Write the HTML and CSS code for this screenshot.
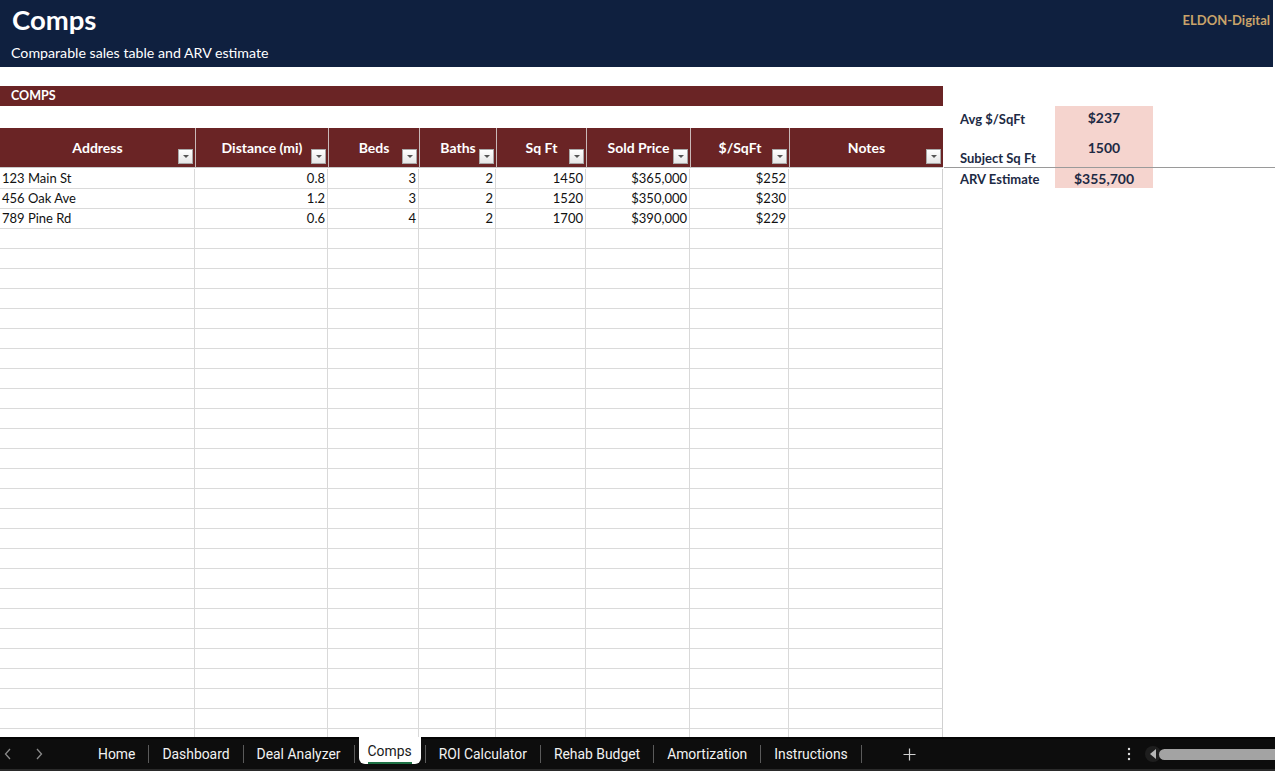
FILE: index.html
```html
<!DOCTYPE html>
<html>
<head>
<meta charset="utf-8">
<link rel="stylesheet" href="styles.css">
</head>
<body>
<div class="page">
  <header class="topbar">
    <div class="titles">
      <div class="title">Comps</div>
      <div class="subtitle">Comparable sales table and ARV estimate</div>
    </div>
    <div class="brand">ELDON-Digital</div>
  </header>

  <main class="content">
    <section class="left">
      <div class="section-bar">COMPS</div>
      <div class="blank-row"></div>
      <div class="table">
        <div class="thead">
          <div class="th">Address<span class="fbtn"></span></div>
          <div class="th">Distance (mi)<span class="fbtn"></span></div>
          <div class="th">Beds<span class="fbtn"></span></div>
          <div class="th">Baths<span class="fbtn"></span></div>
          <div class="th">Sq Ft<span class="fbtn"></span></div>
          <div class="th">Sold Price<span class="fbtn"></span></div>
          <div class="th">$/SqFt<span class="fbtn"></span></div>
          <div class="th">Notes<span class="fbtn"></span></div>
        </div>
        <div class="tbody">
          <div class="tr"><div class="td l">123 Main St</div><div class="td">0.8</div><div class="td">3</div><div class="td">2</div><div class="td">1450</div><div class="td">$365,000</div><div class="td">$252</div><div class="td"></div></div>
          <div class="tr"><div class="td l">456 Oak Ave</div><div class="td">1.2</div><div class="td">3</div><div class="td">2</div><div class="td">1520</div><div class="td">$350,000</div><div class="td">$230</div><div class="td"></div></div>
          <div class="tr"><div class="td l">789 Pine Rd</div><div class="td">0.6</div><div class="td">4</div><div class="td">2</div><div class="td">1700</div><div class="td">$390,000</div><div class="td">$229</div><div class="td"></div></div>
          <div class="tr"><div class="td"></div><div class="td"></div><div class="td"></div><div class="td"></div><div class="td"></div><div class="td"></div><div class="td"></div><div class="td"></div></div>
          <div class="tr"><div class="td"></div><div class="td"></div><div class="td"></div><div class="td"></div><div class="td"></div><div class="td"></div><div class="td"></div><div class="td"></div></div>
          <div class="tr"><div class="td"></div><div class="td"></div><div class="td"></div><div class="td"></div><div class="td"></div><div class="td"></div><div class="td"></div><div class="td"></div></div>
          <div class="tr"><div class="td"></div><div class="td"></div><div class="td"></div><div class="td"></div><div class="td"></div><div class="td"></div><div class="td"></div><div class="td"></div></div>
          <div class="tr"><div class="td"></div><div class="td"></div><div class="td"></div><div class="td"></div><div class="td"></div><div class="td"></div><div class="td"></div><div class="td"></div></div>
          <div class="tr"><div class="td"></div><div class="td"></div><div class="td"></div><div class="td"></div><div class="td"></div><div class="td"></div><div class="td"></div><div class="td"></div></div>
          <div class="tr"><div class="td"></div><div class="td"></div><div class="td"></div><div class="td"></div><div class="td"></div><div class="td"></div><div class="td"></div><div class="td"></div></div>
          <div class="tr"><div class="td"></div><div class="td"></div><div class="td"></div><div class="td"></div><div class="td"></div><div class="td"></div><div class="td"></div><div class="td"></div></div>
          <div class="tr"><div class="td"></div><div class="td"></div><div class="td"></div><div class="td"></div><div class="td"></div><div class="td"></div><div class="td"></div><div class="td"></div></div>
          <div class="tr"><div class="td"></div><div class="td"></div><div class="td"></div><div class="td"></div><div class="td"></div><div class="td"></div><div class="td"></div><div class="td"></div></div>
          <div class="tr"><div class="td"></div><div class="td"></div><div class="td"></div><div class="td"></div><div class="td"></div><div class="td"></div><div class="td"></div><div class="td"></div></div>
          <div class="tr"><div class="td"></div><div class="td"></div><div class="td"></div><div class="td"></div><div class="td"></div><div class="td"></div><div class="td"></div><div class="td"></div></div>
          <div class="tr"><div class="td"></div><div class="td"></div><div class="td"></div><div class="td"></div><div class="td"></div><div class="td"></div><div class="td"></div><div class="td"></div></div>
          <div class="tr"><div class="td"></div><div class="td"></div><div class="td"></div><div class="td"></div><div class="td"></div><div class="td"></div><div class="td"></div><div class="td"></div></div>
          <div class="tr"><div class="td"></div><div class="td"></div><div class="td"></div><div class="td"></div><div class="td"></div><div class="td"></div><div class="td"></div><div class="td"></div></div>
          <div class="tr"><div class="td"></div><div class="td"></div><div class="td"></div><div class="td"></div><div class="td"></div><div class="td"></div><div class="td"></div><div class="td"></div></div>
          <div class="tr"><div class="td"></div><div class="td"></div><div class="td"></div><div class="td"></div><div class="td"></div><div class="td"></div><div class="td"></div><div class="td"></div></div>
          <div class="tr"><div class="td"></div><div class="td"></div><div class="td"></div><div class="td"></div><div class="td"></div><div class="td"></div><div class="td"></div><div class="td"></div></div>
          <div class="tr"><div class="td"></div><div class="td"></div><div class="td"></div><div class="td"></div><div class="td"></div><div class="td"></div><div class="td"></div><div class="td"></div></div>
          <div class="tr"><div class="td"></div><div class="td"></div><div class="td"></div><div class="td"></div><div class="td"></div><div class="td"></div><div class="td"></div><div class="td"></div></div>
          <div class="tr"><div class="td"></div><div class="td"></div><div class="td"></div><div class="td"></div><div class="td"></div><div class="td"></div><div class="td"></div><div class="td"></div></div>
          <div class="tr"><div class="td"></div><div class="td"></div><div class="td"></div><div class="td"></div><div class="td"></div><div class="td"></div><div class="td"></div><div class="td"></div></div>
          <div class="tr"><div class="td"></div><div class="td"></div><div class="td"></div><div class="td"></div><div class="td"></div><div class="td"></div><div class="td"></div><div class="td"></div></div>
          <div class="tr"><div class="td"></div><div class="td"></div><div class="td"></div><div class="td"></div><div class="td"></div><div class="td"></div><div class="td"></div><div class="td"></div></div>
          <div class="tr"><div class="td"></div><div class="td"></div><div class="td"></div><div class="td"></div><div class="td"></div><div class="td"></div><div class="td"></div><div class="td"></div></div>
          <div class="tr"><div class="td"></div><div class="td"></div><div class="td"></div><div class="td"></div><div class="td"></div><div class="td"></div><div class="td"></div><div class="td"></div></div>
        </div>
      </div>
    </section>

    <aside class="right">
      <div class="panel-row r1">
        <div class="plabel">Avg $/SqFt</div>
        <div class="pvalue">$237</div>
      </div>
      <div class="panel-row r2">
        <div class="plabel">Subject Sq Ft</div>
        <div class="pvalue">1500</div>
      </div>
      <div class="panel-row r3">
        <div class="plabel">ARV Estimate</div>
        <div class="pvalue">$355,700</div>
      </div>
    </aside>
  </main>

  <footer class="tabbar">
    <div class="nav">
      <svg class="chev" width="8" height="12" viewBox="0 0 8 12"><path d="M6 1 L1.5 6 L6 11" fill="none" stroke="#8a8a8a" stroke-width="1.3"/></svg>
      <svg class="chev" width="8" height="12" viewBox="0 0 8 12"><path d="M2 1 L6.5 6 L2 11" fill="none" stroke="#8a8a8a" stroke-width="1.3"/></svg>
    </div>
    <div class="tabs">
      <div class="tab">Home</div>
      <div class="sep"></div>
      <div class="tab">Dashboard</div>
      <div class="sep"></div>
      <div class="tab">Deal Analyzer</div>
      <div class="sep"></div>
      <div class="tab active"><span class="atext">Comps</span></div>
      <div class="sep"></div>
      <div class="tab">ROI Calculator</div>
      <div class="sep"></div>
      <div class="tab">Rehab Budget</div>
      <div class="sep"></div>
      <div class="tab">Amortization</div>
      <div class="sep"></div>
      <div class="tab">Instructions</div>
      <div class="sep"></div>
      <div class="plus">
        <svg width="13" height="13" viewBox="0 0 13 13"><path d="M6.5 0.5 V12.5 M0.5 6.5 H12.5" stroke="#d0d0d0" stroke-width="1.2"/></svg>
      </div>
    </div>
    <div class="more">
      <svg width="4" height="14" viewBox="0 0 4 14"><circle cx="2" cy="2" r="1.2" fill="#e0e0e0"/><circle cx="2" cy="7" r="1.2" fill="#e0e0e0"/><circle cx="2" cy="12" r="1.2" fill="#e0e0e0"/></svg>
    </div>
    <div class="hscroll">
      <div class="sarrow"><svg width="8" height="10" viewBox="0 0 8 10"><path d="M7 0 L1 5 L7 10 Z" fill="#b5b5b5"/></svg></div>
      <div class="thumb"></div>
    </div>
  </footer>
</div>
</body>
</html>
```

FILE: styles.css
```css
* { box-sizing: border-box; }
html, body { margin: 0; padding: 0; }
body {
  width: 1275px;
  height: 771px;
  overflow: hidden;
  background: #ffffff;
  font-family: Lato, "Open Sans", sans-serif;
}
.page {
  display: flex;
  flex-direction: column;
  height: 771px;
}

/* top header */
.topbar {
  height: 67px;
  width: 1273px;
  background: #0f203f;
  display: flex;
  justify-content: space-between;
  flex-shrink: 0;
}
.titles { padding: 3px 0 0 12px; }
.title {
  color: #ffffff;
  font-weight: 700;
  font-size: 27.5px;
  line-height: 34px;
}
.subtitle {
  color: #ffffff;
  font-size: 14.2px;
  line-height: 18px;
  margin-top: 7px;
  margin-left: -1px;
}
.brand {
  color: #c9a36a;
  font-weight: 700;
  font-size: 13px;
  padding: 12px 3px 0 0;
}

/* content */
.content {
  flex: 1;
  display: flex;
  overflow: hidden;
  padding-top: 19px;
}
.left {
  width: 944px;
  flex-shrink: 0;
  display: flex;
  flex-direction: column;
  overflow: hidden;
}
.left > * { flex-shrink: 0; }
.section-bar {
  height: 20px;
  background: #6a2425;
  color: #ffffff;
  font-weight: 700;
  font-size: 12.5px;
  line-height: 20px;
  padding-left: 11px;
  width: 943px;
}
.blank-row { height: 22px; }

.thead, .tr {
  display: grid;
  grid-template-columns: 195px 133px 91px 77px 90px 104px 99px 154px;
}
.thead { height: 40px; }
.th {
  position: relative;
  background: #6a2425;
  color: #ffffff;
  font-weight: 700;
  font-size: 14px;
  display: flex;
  align-items: center;
  justify-content: center;
  padding-bottom: 1px;
  border-left: 1px solid #c9b9b9;
  border-bottom: 1px solid #c9c9c9;
}
.th:first-child { border-left: none; }
.fbtn {
  position: absolute;
  right: 2px;
  bottom: 3px;
  width: 15px;
  height: 15px;
  background: linear-gradient(#ffffff, #e6e6e6);
  border: 1px solid #a9a9a9;
}
.fbtn::after {
  content: "";
  position: absolute;
  left: 4px;
  top: 5px;
  border-left: 3px solid transparent;
  border-right: 3px solid transparent;
  border-top: 3px solid #555555;
}

.tbody { padding-top: 1px; }
.tr { height: 20px; }
.td {
  border-right: 1px solid #d9d9d9;
  border-bottom: 1px solid #dadada;
  font-size: 13px;
  line-height: 19px;
  color: #111111;
  text-align: right;
  padding: 0 2px;
  white-space: nowrap;
}
.td:last-child { border-right: 1px solid #d0d0d0; }
.td.l { text-align: left; }

/* right panel */
.right {
  flex: 1;
  padding-top: 20px;
  color: #1d2a44;
}
.panel-row {
  display: flex;
}
.plabel {
  width: 111px;
  padding-left: 16px;
  font-weight: 700;
  font-size: 13px;
  display: flex;
  align-items: flex-end;
  padding-bottom: 1px;
}
.pvalue {
  width: 98px;
  background: #f5d4ce;
  font-weight: 700;
  font-size: 14px;
  display: flex;
  align-items: center;
  justify-content: center;
}
.r1 { height: 22px; }
.r1 .pvalue { padding-top: 1px; }
.r2 { height: 39px; }
.r3 { height: 21px; border-top: 1px solid #9a9a9a; }

/* tab bar */
.tabbar {
  height: 34px;
  flex-shrink: 0;
  background: #0d0d0d;
  border-top: 2px solid #050505;
  border-bottom: 2px solid #2a2a2a;
  display: flex;
  align-items: center;
  font-family: Roboto, "Noto Sans", sans-serif;
  font-size: 13.9px;
  color: #f2f2f2;
}
.nav {
  width: 85px;
  display: flex;
  gap: 23px;
  padding-left: 4px;
  align-items: center;
}
.tabs {
  display: flex;
  align-items: center;
  height: 100%;
}
.tab {
  padding: 0 13px;
  line-height: 30px;
  white-space: nowrap;
}
.sep {
  width: 1px;
  height: 18px;
  background: #5a5a5a;
}
.tab.active {
  align-self: flex-start;
  height: 27px;
  margin: 0 4px;
  padding: 0 9px;
  background: #ffffff;
  color: #1a1a1a;
  border-radius: 0 0 6px 6px;
  line-height: 26px;
  position: relative;
  top: -2px;
  padding-top: 1px;
}
.atext {
  display: inline-block;
  border-bottom: 2px solid #1e7145;
  line-height: 21px;
}
.plus {
  margin-left: 41px;
  display: flex;
  align-items: center;
}
.more {
  margin-left: auto;
  width: 16px;
  display: flex;
  justify-content: center;
  margin-right: 8px;
}
.hscroll {
  width: 130px;
  display: flex;
  align-items: center;
  height: 100%;
}
.sarrow {
  width: 16px;
  height: 16px;
  border-radius: 8px;
  background: #1e1e1e;
  display: flex;
  align-items: center;
  justify-content: center;
}
.thumb {
  flex: 1;
  height: 11px;
  margin-left: -2px;
  background: #a3a3a3;
  border-radius: 6px 0 0 6px;
}
```
